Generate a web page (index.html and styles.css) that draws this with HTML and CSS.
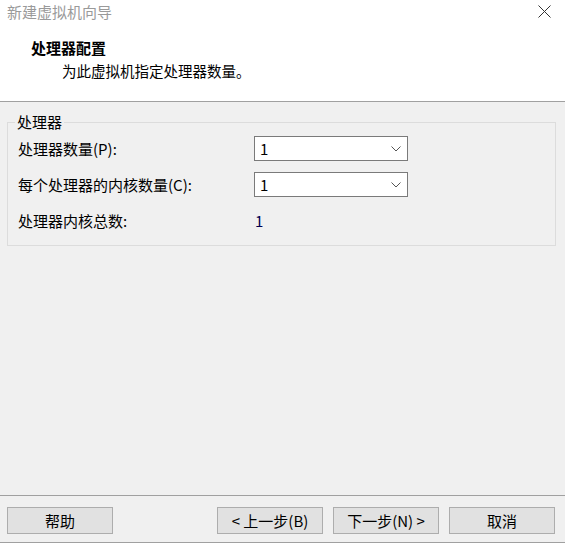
FILE: index.html
```html
<!DOCTYPE html>
<html lang="zh-CN">
<head>
<meta charset="utf-8">
<title>新建虚拟机向导</title>
<link rel="stylesheet" href="styles.css">
</head>
<body>
<div class="window">
  <div class="top">
    <div class="titlebar">
      <span class="title">新建虚拟机向导</span>
      <svg class="close" width="13" height="13" viewBox="0 0 13 13"><path d="M0.5 0.5L12.5 12.5M12.5 0.5L0.5 12.5" stroke="#333" stroke-width="1" fill="none"/></svg>
    </div>
    <div class="header">
      <div class="heading">处理器配置</div>
      <div class="subheading">为此虚拟机指定处理器数量。</div>
    </div>
  </div>
  <div class="content">
    <fieldset class="group">
      <legend>处理器</legend>
      <div class="row">
        <span class="label">处理器数量(P):</span>
        <div class="select"><span>1</span><svg width="10" height="6" viewBox="0 0 10 6"><path d="M0.5 0.5L5 5L9.5 0.5" stroke="#555" fill="none"/></svg></div>
      </div>
      <div class="row">
        <span class="label">每个处理器的内核数量(C):</span>
        <div class="select"><span>1</span><svg width="10" height="6" viewBox="0 0 10 6"><path d="M0.5 0.5L5 5L9.5 0.5" stroke="#555" fill="none"/></svg></div>
      </div>
      <div class="row total">
        <span class="label">处理器内核总数:</span>
        <span class="value">1</span>
      </div>
    </fieldset>
  </div>
  <div class="footer">
    <button class="btn">帮助</button>
    <div class="spacer"></div>
    <button class="btn">&lt; 上一步(B)</button>
    <button class="btn next">下一步(N) &gt;</button>
    <button class="btn cancel">取消</button>
  </div>
</div>
</body>
</html>
```
FILE: styles.css
```css
html, body {
  margin: 0;
  padding: 0;
  background: #f0f0f0;
}
body {
  font-family: "Noto Sans CJK SC", "Microsoft YaHei", sans-serif;
  font-size: 15px;
  color: #000;
}
.window {
  width: 565px;
  height: 543px;
  display: flex;
  flex-direction: column;
  box-sizing: border-box;
  border-bottom: 1px solid #a0a0a0;
}
.top {
  background: #fff;
  height: 101px;
  border-bottom: 1px solid #a0a0a0;
  box-sizing: content-box;
}
.titlebar {
  height: 24px;
  display: flex;
  align-items: center;
  justify-content: space-between;
  padding: 0 14px 0 7px;
}
.title {
  color: #9a9a9a;
  font-size: 15px;
  line-height: 20px;
}
.close {
  margin-top: -2px;
}
.header {
  padding: 14px 0 0 31px;
}
.heading {
  font-weight: bold;
  line-height: 20px;
  font-size: 15px;
}
.subheading {
  padding-left: 31px;
  margin-top: 3px;
  line-height: 20px;
  font-size: 14.5px;
}
.content {
  flex: 1;
  padding: 11px 9px 0 7px;
}
.group {
  margin: 0;
  border: 1px solid #dcdcdc;
  padding: 5px 10px 12px 10px;
}
.group legend {
  padding: 0 2px;
  margin-left: -3px;
  line-height: 18px;
  font-size: 15px;
}
.row {
  display: flex;
  align-items: center;
  height: 25px;
  margin-bottom: 11px;
}
.label {
  width: 236px;
  line-height: 20px;
}
.select {
  width: 154px;
  height: 25px;
  box-sizing: border-box;
  border: 1px solid #7a7a7a;
  background: #fff;
  display: flex;
  align-items: center;
  justify-content: space-between;
  padding: 0 6px 0 5px;
}
.select span {
  line-height: 20px;
}
.total {
  margin-bottom: 0;
}
.value {
  padding-left: 1px;
  color: #000050;
}
.footer {
  height: 47px;
  border-top: 1px solid #a0a0a0;
  display: flex;
  align-items: flex-start;
  padding: 11px 10px 0 7px;
  box-sizing: border-box;
}
.spacer {
  flex: 1;
}
.btn {
  width: 106px;
  height: 27px;
  box-sizing: border-box;
  background: #e1e1e1;
  border: 1px solid #adadad;
  font-family: "Noto Sans CJK SC", "Microsoft YaHei", sans-serif;
  font-size: 15px;
  color: #000;
  padding: 0;
  line-height: 20px;
}
.next {
  margin-left: 10px;
}
.cancel {
  margin-left: 10px;
}
```
